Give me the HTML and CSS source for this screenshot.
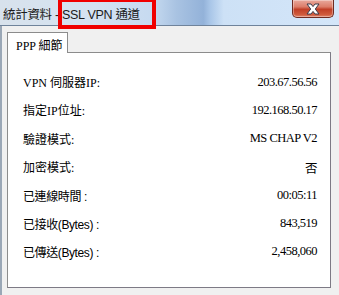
FILE: index.html
```html
<!DOCTYPE html>
<html lang="zh-Hant">
<head>
    <meta charset="UTF-8">
    <meta name="viewport" content="width=device-width, initial-scale=1.0">
    <title>統計資料 - SSL VPN 通道</title>
    <link rel="stylesheet" href="styles.css">
</head>
<body>

<div class="window">
    <!-- 標題列 -->
    <div class="titlebar">
        <span class="title">統計資料 - SSL VPN 通道</span>
        <button class="close" aria-label="關閉">
            <svg width="20" height="12" viewBox="0 0 20 12">
                <path d="M4 1 L8 1 L10 3.6 L12 1 L16 1 L12.3 6 L16 11 L12 11 L10 8.4 L8 11 L4 11 L7.7 6 Z"
                      fill="#fff" stroke="#3b3b4a" stroke-width="1" stroke-linejoin="round"/>
            </svg>
        </button>
        <div class="highlight"></div>
    </div>

    <div class="content">
        <div class="tabs">
            <div class="tab">PPP 細節</div>
        </div>
        <div class="panel">
            <div class="row"><span class="label serif">VPN 伺服器IP:</span><span class="value">203.67.56.56</span></div>
            <div class="row"><span class="label serif">指定IP位址:</span><span class="value">192.168.50.17</span></div>
            <div class="row"><span class="label serif">驗證模式:</span><span class="value">MS CHAP V2</span></div>
            <div class="row"><span class="label serif">加密模式:</span><span class="value">否</span></div>
            <div class="row"><span class="label">已連線時間 :</span><span class="value">00:05:11</span></div>
            <div class="row"><span class="label">已接收(Bytes) :</span><span class="value">843,519</span></div>
            <div class="row"><span class="label">已傳送(Bytes) :</span><span class="value">2,458,060</span></div>
        </div>
    </div>
</div>

</body>
</html>
```

FILE: styles.css
```css
* {
    box-sizing: border-box;
}
body {
    margin: 0;
    background-color: #f0f0f0;
    font-family: "Liberation Sans", "Noto Sans CJK TC", sans-serif;
}
.window {
    width: 339px;
    height: 295px;
    display: flex;
    flex-direction: column;
    background-color: #f0f0f0;
    box-shadow: inset 2px 0 0 #9aa7b6;
}
.titlebar {
    position: relative;
    height: 26px;
    display: flex;
    justify-content: space-between;
    align-items: flex-start;
    border-bottom: 1px solid #6f839b;
    background: linear-gradient(90deg, #d8e2ec 0%, #d4e2f1 28%, #c6daf0 45%, #a9c3e2 52%, #93b2d9 60%, #a9c6e8 62%, #cde1f6 66%, #d4e6f9 100%);
}
.title {
    padding: 4px 0 0 3px;
    font-size: 12.5px;
    color: #1b1b1b;
    letter-spacing: -0.3px;
}
.close {
    width: 42px;
    height: 18px;
    margin-right: 5px;
    padding: 0;
    display: flex;
    justify-content: center;
    align-items: center;
    border: 1px solid #6e2b22;
    border-top: none;
    border-radius: 0 0 5px 5px;
    background: linear-gradient(180deg, #e9a99c 0%, #dc7d69 40%, #c13f27 55%, #cf5a3c 85%, #e0836a 100%);
    box-shadow: inset 0 0 0 1px rgba(255, 255, 255, 0.35);
}
.highlight {
    position: absolute;
    left: 58px;
    top: -2px;
    width: 98px;
    height: 31px;
    border: 4px solid #f00000;
}
.content {
    flex: 1;
    padding: 6px 8px 7px 7px;
    display: flex;
    flex-direction: column;
}
.tabs {
    display: flex;
}
.tab {
    width: 61px;
    height: 21px;
    margin-bottom: -1px;
    padding: 3px 0 0 8px;
    background-color: #fff;
    border: 1px solid #8c8c8c;
    border-bottom: none;
    font-family: "Liberation Serif", "Noto Sans CJK TC", serif;
    font-size: 12px;
    color: #000;
    position: relative;
    z-index: 1;
}
.panel {
    flex: 1;
    background-color: #fff;
    border: 1px solid #8c8c8c;
    border-right-color: #7d7a85;
    border-bottom-color: #7d7a85;
    padding: 15px 13px 0 15px;
    display: grid;
    grid-auto-rows: 28.3px;
    align-content: start;
}
.row {
    display: flex;
    justify-content: space-between;
    align-items: center;
    font-size: 12px;
    color: #000;
}
.label {
    letter-spacing: -0.4px;
}
.label.serif {
    font-family: "Liberation Serif", "Noto Sans CJK TC", serif;
    letter-spacing: 0;
}
.value {
    font-family: "Liberation Serif", "Noto Sans CJK TC", serif;
    font-size: 12.5px;
    letter-spacing: -0.5px;
}
```
